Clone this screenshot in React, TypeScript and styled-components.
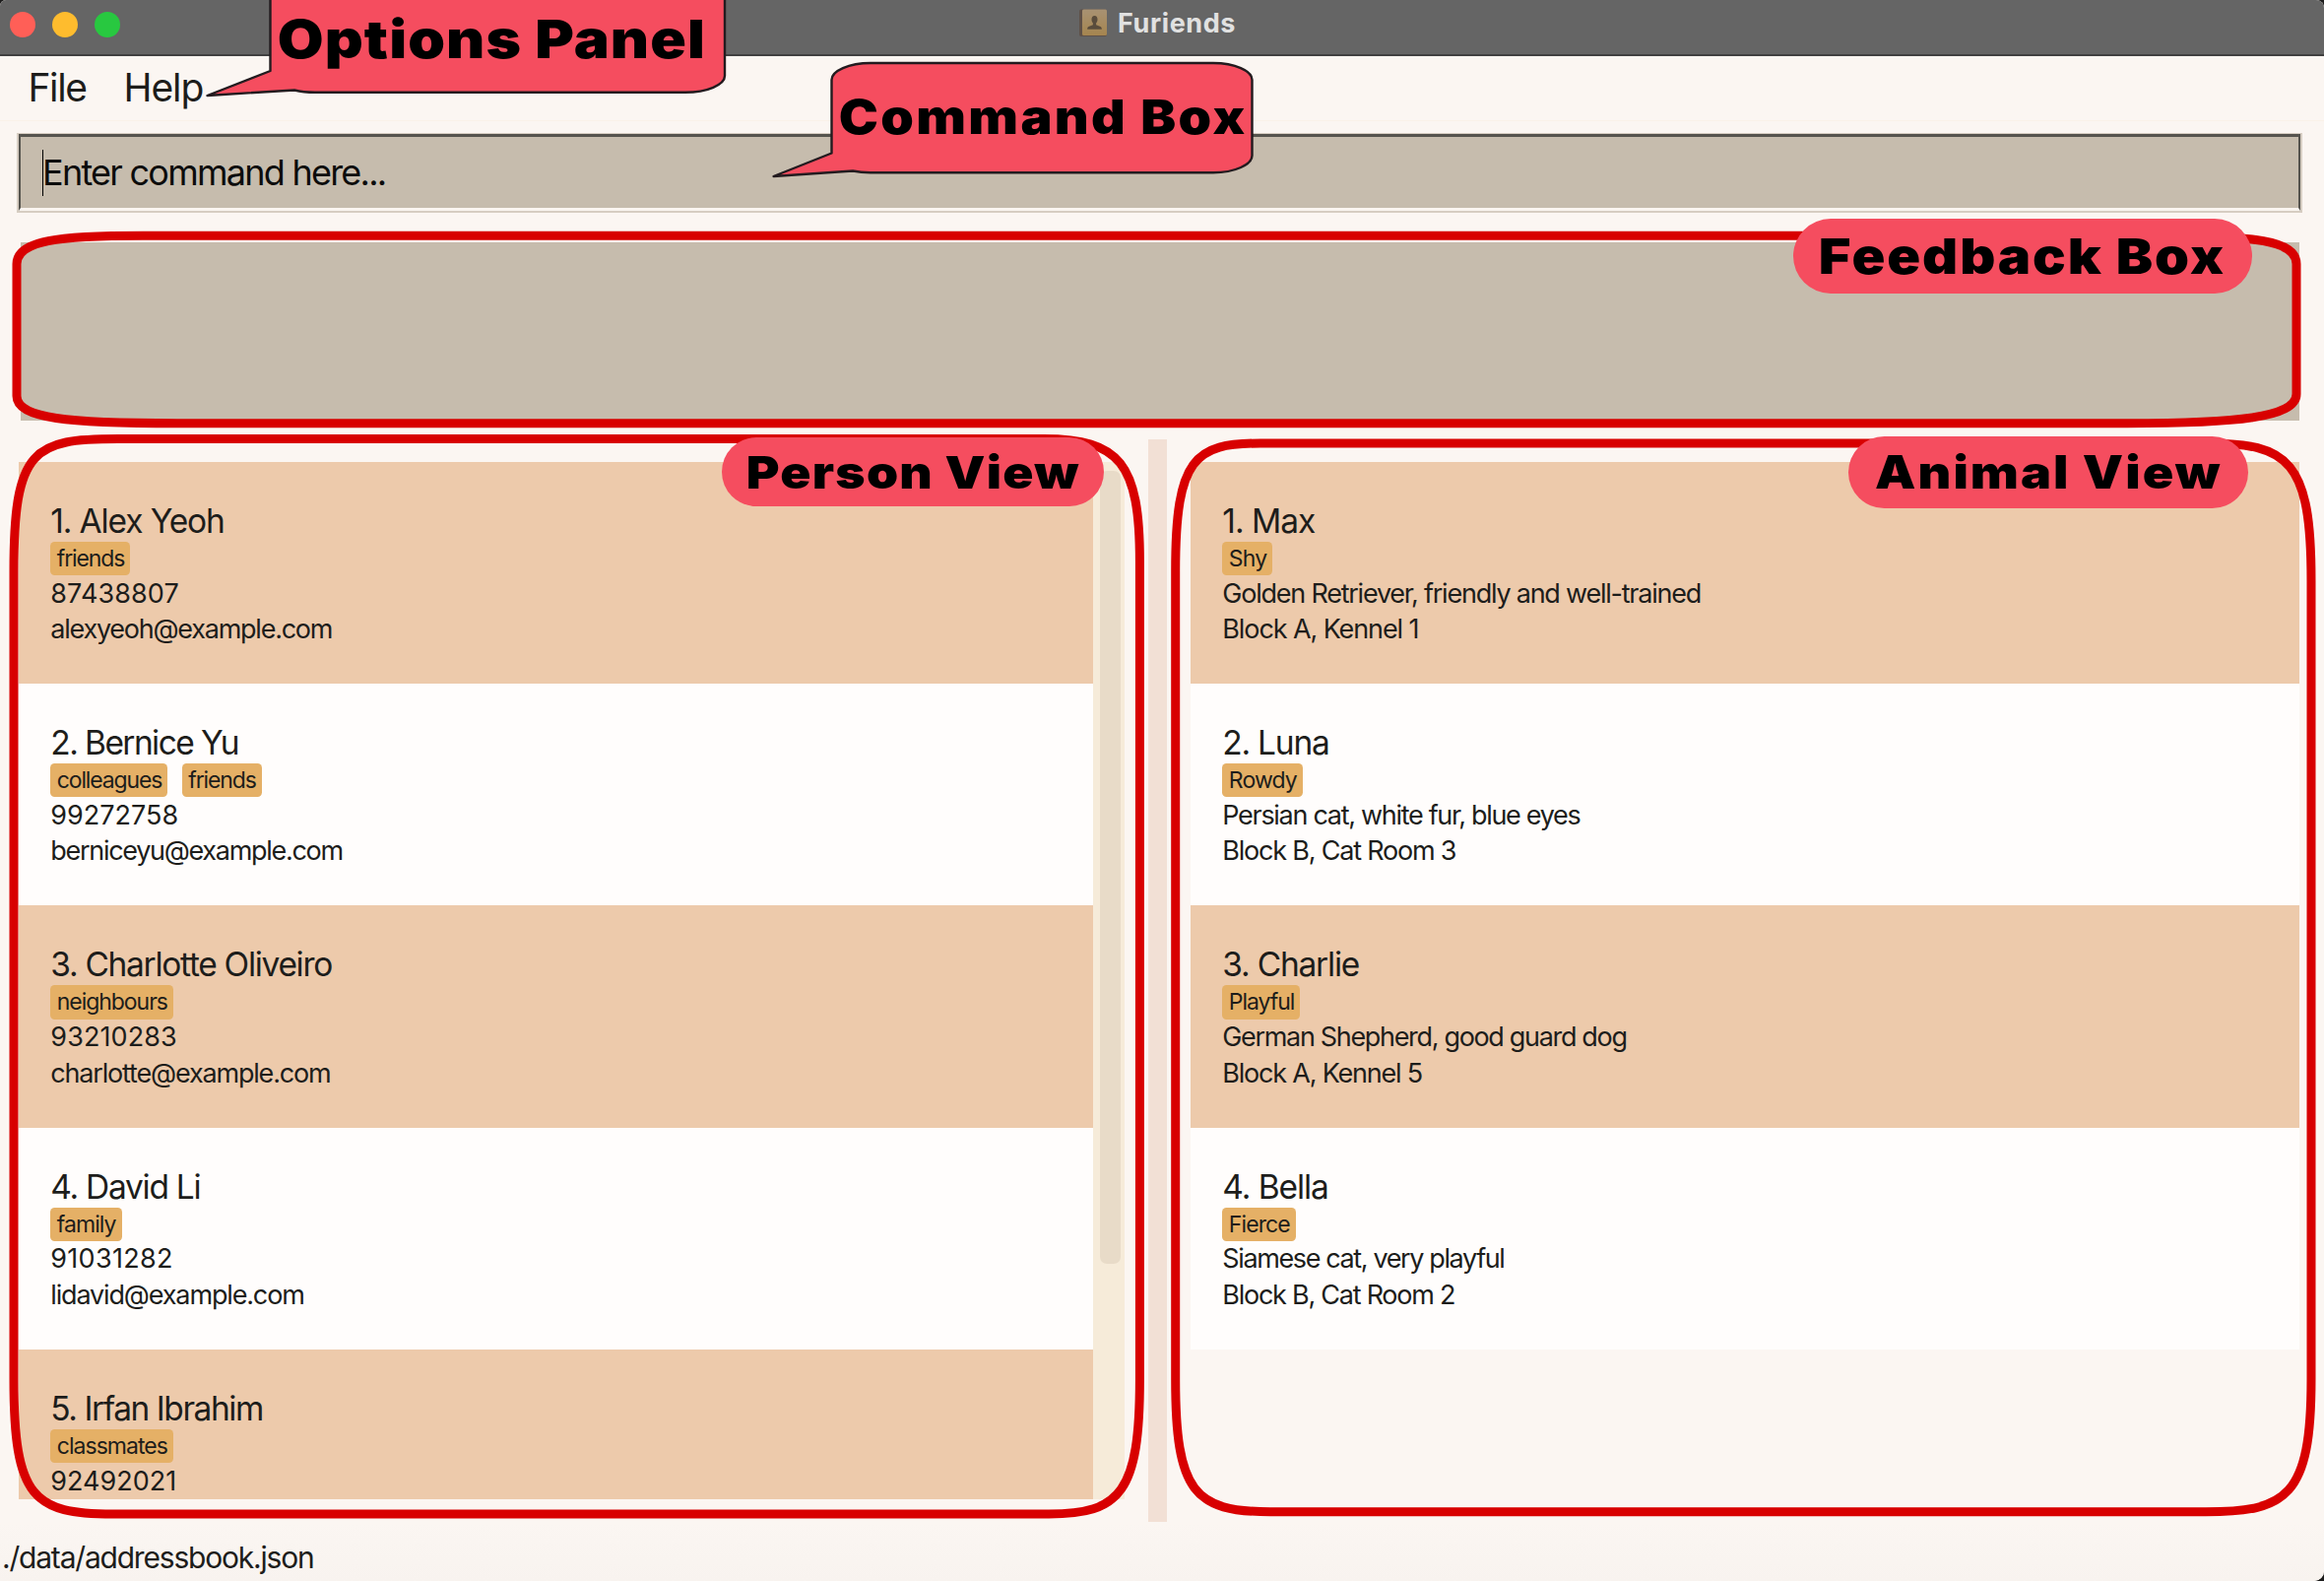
import React from "react";
import styled, { createGlobalStyle } from "styled-components";

const RED = "#d80000";
const PINK = "#f54d5f";

const GlobalStyle = createGlobalStyle`
  * { box-sizing: border-box; }
  html, body { margin: 0; padding: 0; background: #1c1c1c; }
  body { font-family: Inter, "Liberation Sans", sans-serif; color: #1d1d1b; }
`;

const Window = styled.div`
  position: relative;
  display: flex;
  flex-direction: column;
  width: 2360px;
  height: 1605px;
  overflow: hidden;
  border-radius: 6px 8px 10px 0;
  background: #fbf6f2;
`;

const TitleBar = styled.header`
  flex: none;
  display: grid;
  grid-template-columns: 1085px auto 1fr;
  height: 57px;
  padding-left: 10px;
  border-bottom: 2px solid #404040;
  background: #656565;
`;

const Lights = styled.div`
  display: flex;
  gap: 17px;
  padding-top: 12px;
`;

const Light = styled.span<{ $color: string }>`
  width: 26px;
  height: 26px;
  border-radius: 50%;
  background: ${(p) => p.$color};
`;

const Title = styled.div`
  display: flex;
  gap: 10px;
  padding-top: 8px;
  color: #e1e1e1;
  font-size: 27px;
  font-weight: 700;
  line-height: 32px;
  letter-spacing: 0.6px;
`;

const BookIcon = styled.svg`
  flex: none;
  width: 30px;
  height: 30px;
`;

const MenuBar = styled.nav`
  flex: none;
  display: flex;
  gap: 38px;
  height: 66px;
  padding: 8px 0 0 28.5px;
  border-bottom: 1px solid #faf2e8;
  font-size: 39px;
  line-height: 48px;
`;

const MenuItem = styled.span<{ $track: number }>`
  letter-spacing: ${(p) => p.$track}px;
`;

const CommandFrame = styled.div`
  flex: none;
  height: 81px;
  margin: 12px 22px 0 17px;
  border: 2px solid #d6cdc2;
  border-top-width: 1px;
`;

const CommandBox = styled.div`
  display: flex;
  align-items: center;
  height: 78px;
  padding-left: 22px;
  border: 2px solid #55534d;
  border-top-width: 3px;
  border-bottom: 3px solid #faf5f0;
  background: #c6bcad;
`;

const Caret = styled.i`
  width: 1px;
  height: 47px;
  margin-right: -1px;
  background: #000;
`;

const Placeholder = styled.span`
  color: #0c0c0c;
  font-size: 36px;
  line-height: 46px;
  letter-spacing: -1.75px;
  white-space: pre;
`;

const FeedbackBox = styled.div`
  flex: none;
  height: 181px;
  margin: 30px 25px 0 21px;
  background: #c6bcad;
`;

const Split = styled.main`
  flex: none;
  display: grid;
  grid-template-columns: 1147px 19px 1150px;
  column-gap: 0;
  height: 1099px;
  margin-top: 19px;
  padding-left: 19px;
`;

const Pane = styled.section<{ $left?: number }>`
  display: flex;
  height: 1053px;
  margin-top: 23px;
  padding-left: ${(p) => p.$left ?? 0}px;
  overflow: hidden;
`;

const Divider = styled.div`
  background: #f2e0d5;
`;

const List = styled.div<{ $width: number }>`
  width: ${(p) => p.$width}px;
`;

const Card = styled.article<{ $tinted: boolean }>`
  display: flex;
  flex-direction: column;
  height: 225.2px;
  padding: 40px 0 0 32.3px;
  background: ${(p) => (p.$tinted ? "#edcaab" : "#fffdfc")};
`;

const Name = styled.div<{ $track: number }>`
  font-size: 33.5px;
  line-height: 41.8px;
  letter-spacing: ${(p) => p.$track - 0.18}px;
  white-space: pre;
`;

const Tags = styled.div`
  display: flex;
  gap: 14.6px;
  margin-top: -0.8px;
`;

const Tag = styled.span<{ $track: number }>`
  height: 34.3px;
  padding: 0 6px 0 6.5px;
  border-radius: 4.5px;
  background: #e5b066;
  font-size: 23px;
  line-height: 34.6px;
  letter-spacing: ${(p) => p.$track - 0.15}px;
`;

const Line = styled.div<{ $track: number }>`
  position: relative;
  top: 0.6px;
  font-size: 27px;
  line-height: 36.3px;
  letter-spacing: ${(p) => (p.$track < 0 ? p.$track - 0.08 : p.$track)}px;
  white-space: pre;
`;

const ScrollTrack = styled.div`
  width: 32px;
  padding: 9px 4px 0 7px;
  background: #f6ebd9;
`;

const ScrollThumb = styled.div`
  height: 805px;
  border-radius: 7px;
  background: #e8dbc8;
`;

const StatusBar = styled.footer`
  flex: 1;
  padding: 16px 0 0 2px;
  background: linear-gradient(#fbf6f2, #f8f3ef);
  font-size: 30px;
  line-height: 40px;
  letter-spacing: -1.2px;
`;

const Overlay = styled.svg`
  position: absolute;
  inset: 0;
`;

const Label = styled.div<{ $x: number; $y: number; $w: number; $h: number; $size: number; $track: number; $filled?: boolean; $drop?: number }>`
  position: absolute;
  left: ${(p) => p.$x}px;
  top: ${(p) => p.$y}px;
  display: flex;
  justify-content: center;
  width: ${(p) => p.$w}px;
  height: ${(p) => p.$h}px;
  padding-top: ${(p) => p.$drop ?? 0}px;
  border-radius: 38px;
  background: ${(p) => (p.$filled ? PINK : "transparent")};
  color: #000;
  font-size: ${(p) => p.$size}px;
  font-weight: 900;
  line-height: 60px;
  letter-spacing: ${(p) => p.$track}px;
  white-space: pre;
`;

const Wide = styled.span`
  transform: scaleX(1.12);
`;

type Text = [string, number];
type Entry = { name: Text; tags: Text[]; lines: Text[] };

const people: Entry[] = [
  { name: ["1. Alex Yeoh", -0.95], tags: [["friends", -0.97]], lines: [["87438807", 0.1], ["alexyeoh@example.com", -1.16]] },
  { name: ["2. Bernice Yu", -1.4], tags: [["colleagues", -1], ["friends", -0.97]], lines: [["99272758", 0], ["berniceyu@example.com", -1.22]] },
  { name: ["3. Charlotte Oliveiro", -1.12], tags: [["neighbours", -0.9]], lines: [["93210283", 0.1], ["charlotte@example.com", -1.1]] },
  { name: ["4. David Li", -1.09], tags: [["family", -0.8]], lines: [["91031282", 0.3], ["lidavid@example.com", -1.07]] },
  { name: ["5. Irfan Ibrahim", -1.27], tags: [["classmates", -0.83]], lines: [["92492021", 0]] },
];

const animals: Entry[] = [
  { name: ["1. Max", -0.85], tags: [["Shy", -0.67]], lines: [["Golden Retriever, friendly and well-trained", -1.15], ["Block A, Kennel 1", -1.02]] },
  { name: ["2. Luna", -1.05], tags: [["Rowdy", -0.7]], lines: [["Persian cat, white fur, blue eyes", -1.22], ["Block B, Cat Room 3", -1.13]] },
  { name: ["3. Charlie", -1.04], tags: [["Playful", -0.9]], lines: [["German Shepherd, good guard dog", -1.25], ["Block A, Kennel 5", -1.13]] },
  { name: ["4. Bella", -0.9], tags: [["Fierce", -0.73]], lines: [["Siamese cat, very playful", -1.3], ["Block B, Cat Room 2", -1.17]] },
];

function Entries({ items }: { items: Entry[] }) {
  return (
    <>
      {items.map((item, i) => (
        <Card key={item.name[0]} $tinted={i % 2 === 0}>
          <Name $track={item.name[1]}>{item.name[0]}</Name>
          <Tags>
            {item.tags.map(([text, track]) => (
              <Tag key={text} $track={track}>{text}</Tag>
            ))}
          </Tags>
          {item.lines.map(([text, track]) => (
            <Line key={text} $track={track}>{text}</Line>
          ))}
        </Card>
      ))}
    </>
  );
}

export default function App() {
  return (
    <Window>
      <GlobalStyle />
      <TitleBar>
        <Lights>
          <Light $color="#ff5f57" />
          <Light $color="#febc2e" />
          <Light $color="#28c840" />
        </Lights>
        <Title>
          <BookIcon viewBox="0 0 30 30">
            <defs>
              <linearGradient id="cover" x1="0" y1="0" x2="0" y2="1">
                <stop offset="0" stopColor="#a89273" />
                <stop offset="1" stopColor="#a5854f" />
              </linearGradient>
            </defs>
            <rect x="1" y="1.5" width="28" height="27.5" rx="2" fill="#5f5148" />
            <rect x="4" y="1.5" width="25" height="26.5" rx="1.5" fill="url(#cover)" />
            <path d="M16.5 8c2 0 3 1.600 3 3.700 0 1.800-.7 3-1.400 3.800v1.700l4.400 1.900c1 .5 1.300 1.200 1.300 2.600H9.200c0-1.400.3-2.100 1.300-2.600l4.400-1.900v-1.700c-.7-.8-1.400-2-1.400-3.800C13.500 9.600 14.500 8 16.500 8z" fill="#594c3c" />
          </BookIcon>
          Furiends
        </Title>
      </TitleBar>
      <MenuBar>
        <MenuItem $track={-1.4}>File</MenuItem>
        <MenuItem $track={-1.1}>Help</MenuItem>
      </MenuBar>
      <CommandFrame>
        <CommandBox>
          <Caret />
          <Placeholder>Enter command here...</Placeholder>
        </CommandBox>
      </CommandFrame>
      <FeedbackBox />
      <Split>
        <Pane>
          <List $width={1091}>
            <Entries items={people} />
          </List>
          <ScrollTrack>
            <ScrollThumb />
          </ScrollTrack>
        </Pane>
        <Divider />
        <Pane $left={24}>
          <List $width={1126}>
            <Entries items={animals} />
          </List>
        </Pane>
      </Split>
      <StatusBar>./data/addressbook.json</StatusBar>

      <Overlay width="2360" height="1605" viewBox="0 0 2360 1605" fill="none">
        <g stroke={RED} strokeWidth="9">
          <path d="M145 239.300H2190C2290 239.300 2332 244 2332 268V400C2332 424 2270 429.700 2160 429.700H180C70 429.700 17 425 17 402V268C17 244 60 239.300 145 239.300Z" />
          <path d="M120 445.600H1060C1137 445.600 1157.400 470 1157.400 570V1400C1157.400 1515 1138 1537 1065 1537H115C34 1537 14 1521 14 1400V580C14 455 34 445.600 120 445.600Z" />
          <path d="M1280 450H2240C2325 450 2347 468 2347 590V1400C2347 1520 2322 1534.700 2240 1534.700H1290C1213 1534.700 1193.700 1515 1193.700 1400V580C1193.700 465 1213 450 1280 450Z" />
        </g>
        <g fill={PINK} stroke="#231b1f" strokeWidth="2.4" strokeLinejoin="round">
          <path d="M274.500 -10V72L210.500 97L299 91.500Q308 93.800 320 93.800H696C718 93.800 736 86 736 77V-10Z" />
          <path d="M884 64H1232C1254 64 1271.500 72 1271.500 81V158C1271.500 167 1254 175.300 1232 175.300H884Q874 175.300 866 173.500L785.500 179L844.500 155.500V81C844.500 72 862 64 884 64Z" />
        </g>
      </Overlay>
      <Label $x={275} $y={10} $w={448} $h={60} $size={54} $track={1}><Wide>Options Panel</Wide></Label>
      <Label $x={845} $y={89} $w={428} $h={60} $size={48} $track={2.1}><Wide>Command Box</Wide></Label>
      <Label $x={1820.5} $y={222} $w={466} $h={76} $size={50} $track={1.7} $filled $drop={8}><Wide>Feedback Box</Wide></Label>
      <Label $x={733} $y={444} $w={388} $h={70} $size={46} $track={1.1} $filled $drop={5}><Wide>Person View</Wide></Label>
      <Label $x={1877} $y={443} $w={406} $h={73} $size={46.5} $track={1.8} $filled $drop={6}><Wide>Animal View</Wide></Label>
    </Window>
  );
}
